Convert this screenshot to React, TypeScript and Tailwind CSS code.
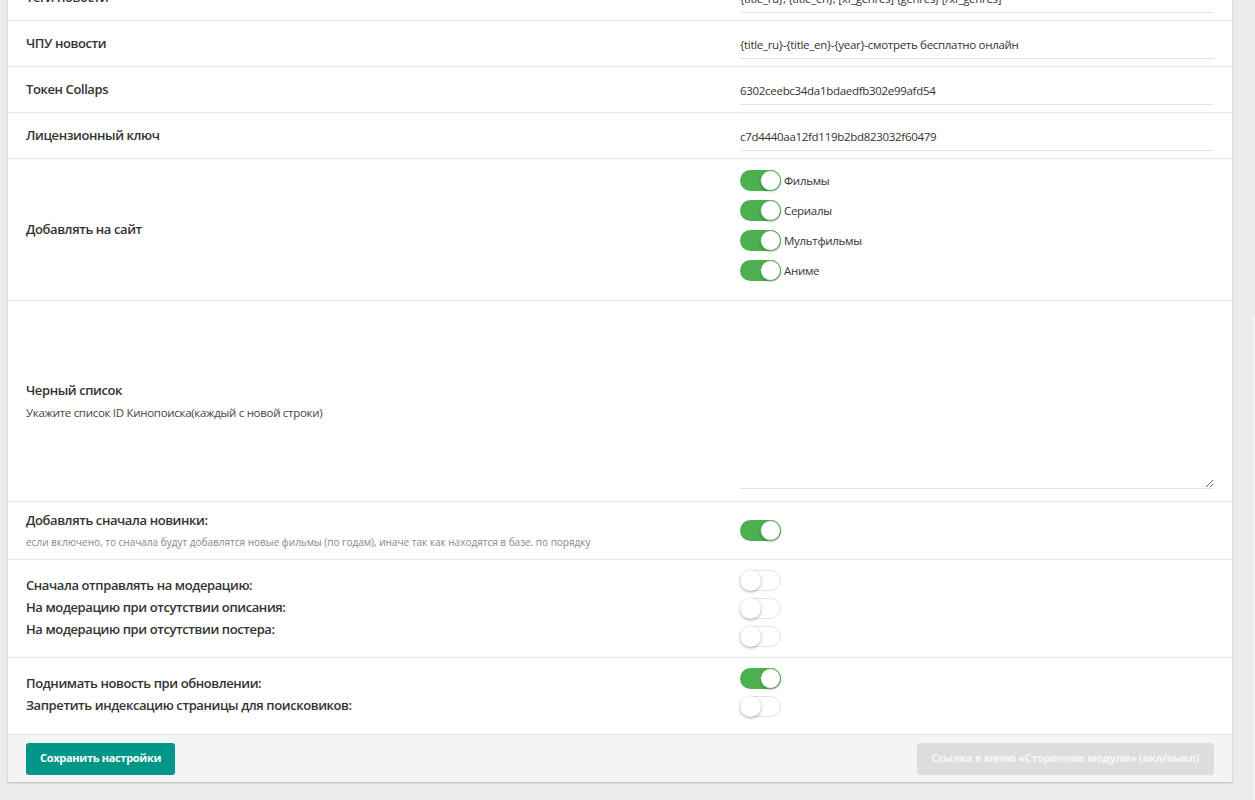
import React from 'react';

function Toggle({ on }: { on: boolean }) {
    return on ? (
        <div className="relative w-[41px] h-[21px] rounded-full bg-[#4caf50] shrink-0">
            <div className="absolute right-0 top-0 w-[21px] h-[21px] rounded-full bg-white border border-[#4caf50] shadow-[0_1px_2px_rgba(0,0,0,0.25)]"></div>
        </div>
    ) : (
        <div className="relative w-[41px] h-[21px] rounded-full bg-white border border-[#e3e3e3] shrink-0">
            <div className="absolute -left-px -top-px w-[21px] h-[21px] rounded-full bg-white shadow-[0_1px_3px_rgba(0,0,0,0.35)]"></div>
        </div>
    );
}

const label = 'text-[13px] font-semibold text-[#333] tracking-[-0.4px]';

function InputRow({ title, value }: { title: string; value: string }) {
    return (
        <div className="grid grid-cols-[1fr_474px] items-center h-[46px] px-[18px] border-b border-[#e8e8e8]">
            <div className={label}>{title}</div>
            <div className="h-[26px] mt-[4px] border-b border-[#e3e3e3] text-[11.5px] tracking-[-0.3px] text-[#333] leading-[24px] whitespace-nowrap overflow-hidden">
                {value}
            </div>
        </div>
    );
}

export default function App() {
    const types = ['Фильмы', 'Сериалы', 'Мультфильмы', 'Аниме'];

    return (
        <div className="min-h-[800px] bg-[#ebebeb] overflow-hidden relative" style={{ fontFamily: '"Open Sans", "Noto Sans", sans-serif' }}>
            <div className="ml-[8px] w-[1224px] -mt-[25px] bg-white shadow-[0_1px_2px_rgba(0,0,0,0.2)]">
                <InputRow title="Теги новости" value="{title_ru}, {title_en}, [xf_genres] {genres} [/xf_genres]" />
                <InputRow title="ЧПУ новости" value="{title_ru}-{title_en}-{year}-смотреть бесплатно онлайн" />
                <InputRow title="Токен Collaps" value="6302ceebc34da1bdaedfb302e99afd54" />
                <InputRow title="Лицензионный ключ" value="c7d4440aa12fd119b2bd823032f60479" />

                <div className="grid grid-cols-[1fr_474px] items-center h-[142px] px-[18px] border-b border-[#e8e8e8]">
                    <div className={label}>Добавлять на сайт</div>
                    <div className="self-start pt-[11px] flex flex-col gap-[9px]">
                        {types.map((t) => (
                            <div key={t} className="flex items-center gap-[3px]">
                                <Toggle on={true} />
                                <span className="text-[11.5px] tracking-[-0.3px] text-[#333]">{t}</span>
                            </div>
                        ))}
                    </div>
                </div>

                <div className="grid grid-cols-[1fr_474px] items-center h-[201px] px-[18px] border-b border-[#e8e8e8]">
                    <div>
                        <div className={label}>Черный список</div>
                        <div className="text-[11.5px] tracking-[-0.3px] text-[#444] mt-[3px]">Укажите список ID Кинопоиска(каждый с новой строки)</div>
                    </div>
                    <textarea className="self-start mt-[11px] h-[177px] border-b border-[#e3e3e3] outline-none text-[12px] resize-y"></textarea>
                </div>

                <div className="grid grid-cols-[1fr_474px] items-center h-[58px] px-[18px] border-b border-[#e8e8e8]">
                    <div>
                        <div className={label}>Добавлять сначала новинки:</div>
                        <div className="text-[10px] text-[#888] mt-[4px]">если включено, то сначала будут добавлятся новые фильмы (по годам), иначе так как находятся в базе. по порядку</div>
                    </div>
                    <Toggle on={true} />
                </div>

                <div className="grid grid-cols-[1fr_474px] h-[98px] px-[18px] border-b border-[#e8e8e8]">
                    <div className={`pt-[15px] flex flex-col gap-[2px] leading-[20px] ${label}`}>
                        <div>Сначала отправлять на модерацию:</div>
                        <div>На модерацию при отсутствии описания:</div>
                        <div>На модерацию при отсутствии постера:</div>
                    </div>
                    <div className="pt-[10px] flex flex-col gap-[7px]">
                        <Toggle on={false} />
                        <Toggle on={false} />
                        <Toggle on={false} />
                    </div>
                </div>

                <div className="grid grid-cols-[1fr_474px] h-[76px] px-[18px]">
                    <div className={`pt-[15px] flex flex-col gap-[2px] leading-[20px] ${label}`}>
                        <div>Поднимать новость при обновлении:</div>
                        <div>Запретить индексацию страницы для поисковиков:</div>
                    </div>
                    <div className="pt-[10px] flex flex-col gap-[7px]">
                        <Toggle on={true} />
                        <Toggle on={false} />
                    </div>
                </div>

                <div className="flex items-center justify-between h-[48px] px-[18px] bg-[#f4f4f4] border-t border-[#e3e3e3]">
                    <button className="h-[32px] px-[14px] rounded-[3px] bg-[#009688] text-white text-[11px] tracking-[-0.3px] font-bold">Сохранить настройки</button>
                    <button className="h-[32px] px-[15px] rounded-[3px] bg-[#dddddd] text-[#f7f7f7] text-[11px] tracking-[-0.3px] font-bold">Ссылка в меню «Сторонние модули» (вкл/выкл)</button>
                </div>
            </div>
            <div className="absolute right-0 top-[315px] bottom-0 w-[2px] bg-[#f3f3f3]"></div>
        </div>
    );
}
